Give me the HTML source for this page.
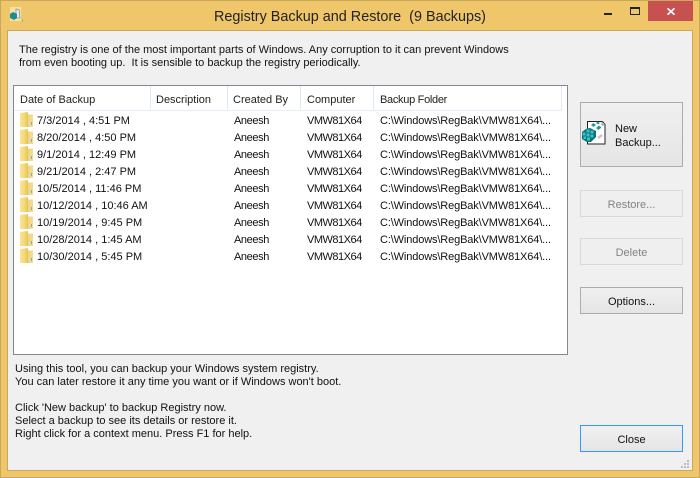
<!DOCTYPE html>
<html><head><meta charset="utf-8"><style>
html,body{margin:0;padding:0}
body{width:700px;height:478px;overflow:hidden;position:relative;background:#efc76a;font:11px/15px "Liberation Sans",sans-serif;color:#111}
div{position:absolute;white-space:nowrap;box-sizing:border-box}
#win{left:0;top:0;width:700px;height:478px;border:1px solid #c9a85c}
#client{left:7px;top:30px;width:686px;height:441px;background:#f0f0f0;border:1px solid #c9a85c}
#title{left:0;top:7px;width:700px;text-align:center;font-size:14.4px;line-height:20px;color:#222}
#close{left:648px;top:1px;width:45px;height:20px;background:#c75050}
#list{left:13px;top:85px;width:555px;height:270px;background:#fff;border:1px solid #828790}
.hd{top:86px;height:24px;border-right:1px solid #e3e9f3;line-height:28px;padding-left:6px;color:#222;background:#fff;font-size:11px}
#hline{left:14px;top:110px;width:548px;height:1px;background:#e5edf7}
.c{line-height:19px;height:19px;color:#111}
.a{left:234px;letter-spacing:-.4px}
.v{left:307px;letter-spacing:-.5px}
.p{left:380px;letter-spacing:-.13px}
.btn{left:580px;width:103px;text-align:center;background:linear-gradient(#f0f0f0,#e5e5e5);border:1px solid #acacac;color:#111}
.dis{background:#efefef;border-color:#d9d9d9;color:#838383}
.ic{position:absolute;left:20px}
</style></head><body>
<div id="win"></div>
<div id="client"></div>
<svg style="position:absolute;left:9px;top:7px" width="15" height="16" viewBox="0 0 15 16"><rect x="1" y="0" width="11" height="14" fill="#f6e3a4"/><path d="M7 2l3 .5 1 8.500H7z" fill="#e8eef0" stroke="#667" stroke-width=".6"/><path d="M1 7l3-2 4 2v4l-3 2-4-2z" fill="#1f8c90"/><rect x="13" y="12" width="1" height="3" fill="#9ab"/></svg>
<div id="title">Registry Backup and Restore&nbsp; (9 Backups)</div>
<div style="left:604px;top:13px;width:8px;height:2px;background:#222"></div>
<div style="left:630px;top:7px;width:10px;height:8px;border:1px solid #222;border-top-width:2px"></div>
<div id="close"></div>
<svg style="position:absolute;left:667px;top:8px" width="8" height="7" viewBox="0 0 8 7"><path d="M.5 .3l7 6.400M7.500 .3l-7 6.400" stroke="#fff" stroke-width="1.700"/></svg>
<div style="left:19px;top:43px">The registry is one of the most important parts of Windows. Any corruption to it can prevent Windows</div>
<div style="left:19px;top:56px">from even booting up.&nbsp; It is sensible to backup the registry periodically.</div>

<div id="list"></div>
<div class="hd" style="left:14px;width:137px">Date of Backup</div>
<div class="hd" style="left:151px;width:77px;padding-left:5px">Description</div>
<div class="hd" style="left:228px;width:73px;padding-left:5px">Created By</div>
<div class="hd" style="left:301px;width:73px">Computer</div>
<div class="hd" style="left:374px;width:188px;letter-spacing:-.3px">Backup Folder</div>
<div id="hline"></div>

<svg width="0" height="0" style="position:absolute"><defs>
<linearGradient id="g" x1="0" x2="1"><stop offset="0" stop-color="#f8e695"/><stop offset=".6" stop-color="#f2d777"/><stop offset="1" stop-color="#e6c25a"/></linearGradient>
<linearGradient id="h" x1="0" x2="1"><stop offset="0" stop-color="#e8c96e"/><stop offset="1" stop-color="#f3dd8e"/></linearGradient>
<symbol id="fo" viewBox="0 0 13 15"><path d="M0 1.500h7l1 1h5V15H0z" fill="url(#h)"/><path d="M0 1 8 0V15H0z" fill="url(#g)"/><rect x="11" y="10" width="1" height="3" fill="#6fb0de"/></symbol>
</defs></svg>

<svg class="ic" style="top:112px" width="13" height="15"><use href="#fo"/></svg>
<svg class="ic" style="top:129px" width="13" height="15"><use href="#fo"/></svg>
<svg class="ic" style="top:146px" width="13" height="15"><use href="#fo"/></svg>
<svg class="ic" style="top:163px" width="13" height="15"><use href="#fo"/></svg>
<svg class="ic" style="top:180px" width="13" height="15"><use href="#fo"/></svg>
<svg class="ic" style="top:197px" width="13" height="15"><use href="#fo"/></svg>
<svg class="ic" style="top:214px" width="13" height="15"><use href="#fo"/></svg>
<svg class="ic" style="top:231px" width="13" height="15"><use href="#fo"/></svg>
<svg class="ic" style="top:248px" width="13" height="15"><use href="#fo"/></svg>

<div class="c" style="left:37px;top:112px">7/3/2014 , 4:51 PM</div>
<div class="c" style="left:37px;top:129px">8/20/2014 , 4:50 PM</div>
<div class="c" style="left:37px;top:146px">9/1/2014 , 12:49 PM</div>
<div class="c" style="left:37px;top:163px">9/21/2014 , 2:47 PM</div>
<div class="c" style="left:37px;top:180px">10/5/2014 , 11:46 PM</div>
<div class="c" style="left:37px;top:197px">10/12/2014 , 10:46 AM</div>
<div class="c" style="left:37px;top:214px">10/19/2014 , 9:45 PM</div>
<div class="c" style="left:37px;top:231px">10/28/2014 , 1:45 AM</div>
<div class="c" style="left:37px;top:248px">10/30/2014 , 5:45 PM</div>

<div class="c a" style="top:112px">Aneesh</div><div class="c v" style="top:112px">VMW81X64</div><div class="c p" style="top:112px">C:\Windows\RegBak\VMW81X64\...</div>
<div class="c a" style="top:129px">Aneesh</div><div class="c v" style="top:129px">VMW81X64</div><div class="c p" style="top:129px">C:\Windows\RegBak\VMW81X64\...</div>
<div class="c a" style="top:146px">Aneesh</div><div class="c v" style="top:146px">VMW81X64</div><div class="c p" style="top:146px">C:\Windows\RegBak\VMW81X64\...</div>
<div class="c a" style="top:163px">Aneesh</div><div class="c v" style="top:163px">VMW81X64</div><div class="c p" style="top:163px">C:\Windows\RegBak\VMW81X64\...</div>
<div class="c a" style="top:180px">Aneesh</div><div class="c v" style="top:180px">VMW81X64</div><div class="c p" style="top:180px">C:\Windows\RegBak\VMW81X64\...</div>
<div class="c a" style="top:197px">Aneesh</div><div class="c v" style="top:197px">VMW81X64</div><div class="c p" style="top:197px">C:\Windows\RegBak\VMW81X64\...</div>
<div class="c a" style="top:214px">Aneesh</div><div class="c v" style="top:214px">VMW81X64</div><div class="c p" style="top:214px">C:\Windows\RegBak\VMW81X64\...</div>
<div class="c a" style="top:231px">Aneesh</div><div class="c v" style="top:231px">VMW81X64</div><div class="c p" style="top:231px">C:\Windows\RegBak\VMW81X64\...</div>
<div class="c a" style="top:248px">Aneesh</div><div class="c v" style="top:248px">VMW81X64</div><div class="c p" style="top:248px">C:\Windows\RegBak\VMW81X64\...</div>

<div class="btn" style="top:102px;height:65px"></div>
<svg style="position:absolute;left:581px;top:121px" width="26" height="24" viewBox="0 0 26 24"><path d="M6.500 .5h15l2.500 3v19.500H6.500z" fill="#fff" stroke="#222"/><path d="M21 .5v3.500h3" fill="#ddd" stroke="#777" stroke-width=".7"/><path d="M10 4l2.500-2 2.500 2-2.500 2zM15 7l3-2.500 2.500 2-3 2.500zM15 2l2-1.500 2 1.500-2 1.500z" fill="#1f9aa0"/><path d="M17 17l4-3" stroke="#c4c4c4" stroke-width="2.500"/><path d="M1 11l4-3 4-1 6 3v6l-5 5H6l-5-3z" fill="#0d6f76"/><path d="M1.500 11.500h3v3h-3zM5.500 8.500h3v3h-3zM9.500 9.500h3v3h-3zM5.500 12.500h3v3h-3zM9.500 13.500h3v3h-3zM2.500 15.500h2.500v2.500H2.500zM6 16.500h3v3H6z" fill="#35c6cb"/></svg>
<div style="left:615px;top:122px;line-height:14px;color:#111">New<br>Backup...</div>
<div class="btn dis" style="top:190px;height:27px;line-height:28px">Restore...</div>
<div class="btn dis" style="top:238px;height:27px;line-height:28px">Delete</div>
<div class="btn" style="top:287px;height:27px;line-height:28px">Options...</div>
<div class="btn" style="top:425px;height:27px;line-height:28px;border-color:#3399ff">Close</div>

<div style="left:15px;top:362px">Using this tool, you can backup your Windows system registry.</div>
<div style="left:15px;top:375px">You can later restore it any time you want or if Windows won't boot.</div>
<div style="left:15px;top:401px">Click 'New backup' to backup Registry now.</div>
<div style="left:15px;top:414px">Select a backup to see its details or restore it.</div>
<div style="left:15px;top:427px">Right click for a context menu. Press F1 for help.</div>

<svg style="position:absolute;left:681px;top:460px" width="8" height="8"><path d="M6 0h2v2H6zM3 3h2v2H3zM6 3h2v2H6zM0 6h2v2H0zM3 6h2v2H3zM6 6h2v2H6z" fill="#bdbdbd"/></svg>
</body></html>
